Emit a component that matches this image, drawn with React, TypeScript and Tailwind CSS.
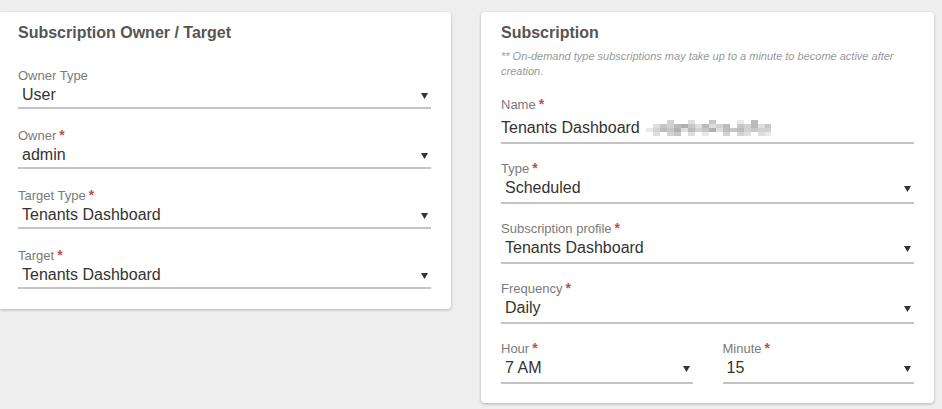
import React from "react";

const font = { fontFamily: '"Liberation Sans", Arial, sans-serif' };

function Req() {
  return <span className="ml-[3px] text-[14px] font-bold leading-none text-[#bf4f4c]">*</span>;
}

function Arrow() {
  return (
    <svg width="7" height="6" viewBox="0 0 7 6" className="mt-[2px] shrink-0">
      <polygon points="0,0 7,0 3.5,6" fill="#333" />
    </svg>
  );
}

function SelectField({
  label,
  value,
  required,
  tall,
  className = "",
}: {
  label: string;
  value: string;
  required?: boolean;
  tall?: boolean;
  className?: string;
}) {
  return (
    <div className={className}>
      <div className="h-[15px] text-[13px] leading-[15px] text-[#7a7a7a]">
        {label}
        {required && <Req />}
      </div>
      <div
        className={`flex items-center justify-between border-b-2 border-[#c4c4c4] pl-1 pr-[3px] pt-[2px] ${tall ? "pb-1" : "pb-[2px]"}`}
      >
        <span className="text-[16px] leading-5 text-[#333]">{value}</span>
        <Arrow />
      </div>
    </div>
  );
}

// pixelated blur that sits after the name in the screenshot
const blur = [
  "...3..2..4...1.5..",
  ".24356425235.43524",
  "1354625346254534331",
  ".2.34.2.1..3.32.21",
];

function Pixels() {
  return (
    <svg width="125" height="18" className="ml-[6px]">
      {blur.map((row, r) =>
        row.split("").map((c, i) =>
          c === "." ? null : (
            <rect
              key={`${r}-${i}`}
              x={i * 7}
              y={r * 4 + 1}
              width="7"
              height="4"
              fill={`rgba(0,0,0,${0.04 + Number(c) * 0.045})`}
            />
          )
        )
      )}
    </svg>
  );
}

export default function App() {
  return (
    <div className="flex h-[409px] w-full items-start gap-[30px] bg-[#eeeeee] pt-3" style={font}>
      <div className="w-[451px] rounded-r-[4px] bg-white pt-3 pb-5 pl-[18px] pr-5 shadow-[0_1px_3px_rgba(0,0,0,0.25)]">
        <h2 className="text-[16px] font-bold leading-[18px] text-[#555]">Subscription Owner / Target</h2>
        <div className="mt-[26px] flex flex-col gap-[19px]">
          <SelectField label="Owner Type" value="User" />
          <SelectField label="Owner" value="admin" required />
          <SelectField label="Target Type" value="Tenants Dashboard" required />
          <SelectField label="Target" value="Tenants Dashboard" required />
        </div>
      </div>

      <div className="w-[453px] rounded-[4px] bg-white px-5 pt-3 pb-[19px] shadow-[0_1px_3px_rgba(0,0,0,0.25)]">
        <h2 className="text-[16px] font-bold leading-[18px] text-[#555]">Subscription</h2>
        <p className="mt-[7px] text-[11px] italic leading-[15px] text-[#999]">
          ** On-demand type subscriptions may take up to a minute to become active after creation.
        </p>
        <div className="mt-[18px] flex flex-col gap-[17px]">
          <div>
            <div className="h-[15px] text-[13px] leading-[15px] text-[#7a7a7a]">
              Name
              <Req />
            </div>
            <div className="flex items-center border-b-2 border-[#c4c4c4] pt-[6px] pb-1">
              <span className="text-[16px] leading-5 text-[#333]">Tenants Dashboard</span>
              <Pixels />
            </div>
          </div>
          <SelectField label="Type" value="Scheduled" required tall />
          <SelectField label="Subscription profile" value="Tenants Dashboard" required tall />
          <SelectField label="Frequency" value="Daily" required tall />
          <div className="grid grid-cols-2 gap-[30px]">
            <SelectField label="Hour" value="7 AM" required tall />
            <SelectField label="Minute" value="15" required tall />
          </div>
        </div>
      </div>
    </div>
  );
}
